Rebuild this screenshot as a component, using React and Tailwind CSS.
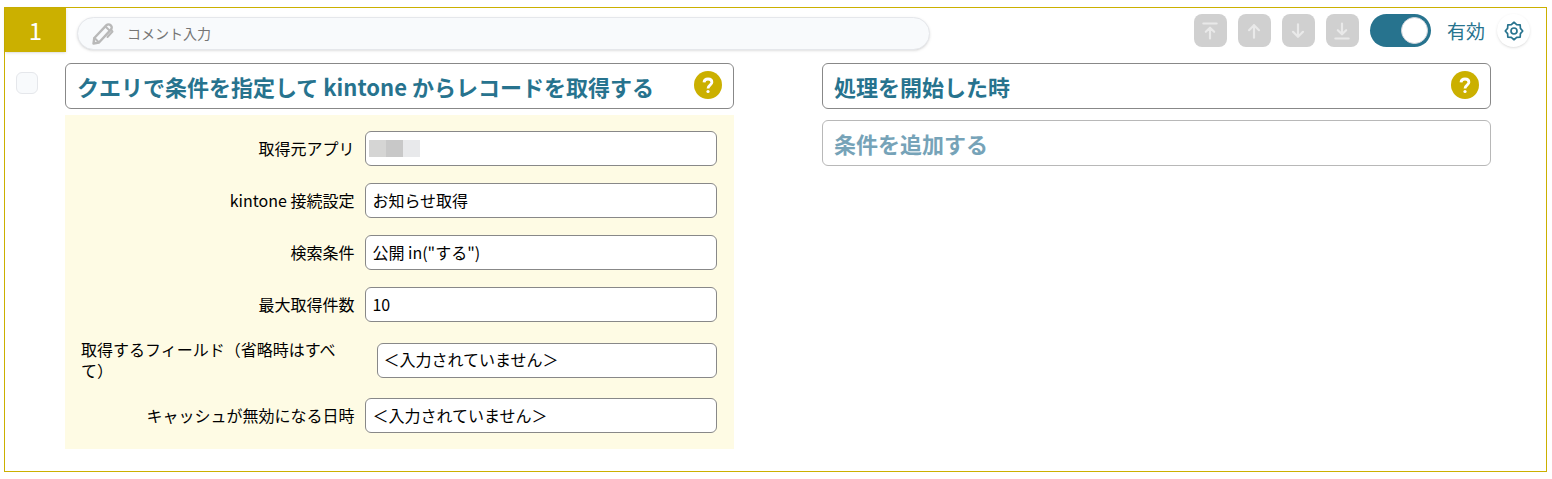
import { useState } from "react";

const fields = [
  { id: "sourceApp", label: "取得元アプリ", masked: true },
  { id: "connection", label: "kintone 接続設定", value: "お知らせ取得" },
  { id: "query", label: "検索条件", value: '公開 in("する")' },
  { id: "limit", label: "最大取得件数", value: "10" },
  { id: "fieldCodes", label: "取得するフィールド（省略時はすべて）", value: "＜入力されていません＞", wide: true },
  { id: "cacheExpire", label: "キャッシュが無効になる日時", value: "＜入力されていません＞" },
];

const moveButtons = [
  { label: "一番上へ移動", path: "M4 3h16M12 21V9M7 13l5-5 5 5" },
  { label: "上へ移動", path: "M12 20V5M6 11l6-6 6 6" },
  { label: "下へ移動", path: "M12 4v15M6 13l6 6 6-6" },
  { label: "一番下へ移動", path: "M4 21h16M12 3v12M7 11l5 5 5-5" },
];

const PencilIcon = () => (
  <svg viewBox="0 0 24 24" className="size-6 shrink-0" fill="none" stroke="#b9b9b9" strokeWidth="2.4" strokeLinecap="round" strokeLinejoin="round" aria-hidden="true">
    <path d="M2.500 21.500l.8-5.500L15.500 3.200a2.800 2.800 0 0 1 4 0l.4.4a2.800 2.800 0 0 1 0 4L8 20.500z" />
    <path d="M3.500 16l4.300 4.200M14.500 4.500l4 4" strokeWidth="2" />
    <path d="M20 7.500l1.500 2-5 5.500" strokeWidth="2" />
  </svg>
);

const GearIcon = () => (
  <svg viewBox="0 0 24 24" className="size-5" fill="none" stroke="#27738e" strokeWidth="2" strokeLinejoin="round" aria-hidden="true">
    <path d="M12 1.500l3.200 2.800 4.200.3.300 4.200 2.800 3.200-2.800 3.200-.3 4.200-4.200.3-3.200 2.800-3.200-2.800-4.200-.3-.3-4.200L1.500 12l2.800-3.200.3-4.200 4.200-.3z" />
    <circle cx="12" cy="12" r="3.600" />
  </svg>
);

const HelpButton = () => (
  <button type="button" aria-label="ヘルプ" className="size-7 shrink-0 rounded-full bg-[#cbb000] mb-0.5">
    <svg viewBox="0 0 28 28" className="size-7" fill="none" stroke="white" strokeWidth="2.8" aria-hidden="true">
      <path d="M10 11.300c.2-2.100 1.800-3.300 4-3.300s3.900 1.200 3.900 3.200c0 3-3.900 2.900-3.900 6.300" />
      <circle cx="14" cy="20.500" r="1.600" fill="white" stroke="none" />
    </svg>
  </button>
);

const TitleBox = ({ children }) => (
  <div className="flex items-center h-[46px] px-[11px] bg-white border border-[#888888] rounded-md">
    <button type="button" className="flex-1 text-left text-[22px] leading-8 font-bold text-[#27738e]">
      {children}
    </button>
    <HelpButton />
  </div>
);

const FieldRow = ({ field }) => (
  <div
    className={
      field.wide
        ? "grid grid-cols-[11fr_14fr] gap-7 items-center"
        : "grid grid-cols-[7fr_9fr] gap-[11px] items-center"
    }
  >
    <label htmlFor={field.id} className={field.wide ? "leading-[21px]" : "text-right leading-[21px]"}>
      {field.label}
    </label>
    {field.masked ? (
      <button id={field.id} type="button" className="flex items-center h-[35px] pl-[3px] bg-white border border-[#888888] rounded-md">
        <span className="size-[17px] bg-[#d5d5d4]" />
        <span className="size-[17px] bg-[#c8c8c8]" />
        <span className="size-[17px] bg-[#e8e9eb]" />
      </button>
    ) : (
      <input
        id={field.id}
        type="text"
        defaultValue={field.value}
        className="w-full min-w-0 h-[35px] px-[6px] pb-0.5 bg-white border border-[#888888] rounded-md"
      />
    )}
  </div>
);

const App = () => {
  const [enabled, setEnabled] = useState(true);
  const [comment, setComment] = useState("");

  return (
    <div className="pt-[7px] pl-1 pr-[5px] bg-white text-black text-base font-['Noto_Sans_CJK_JP',sans-serif]">
      <section className="border border-[#cbb000] pb-[22px]">
        {/* Cabecera del paso */}
        <header className="flex items-start pr-4">
          <div className="flex items-center justify-center w-[61px] h-11 shrink-0 bg-[#cbb000] text-white text-2xl shadow">
            1
          </div>

          <div className="flex flex-1 items-center max-w-[853px] h-[33px] mt-[9px] ml-[11px] pl-[13px] gap-3 rounded-full border border-gray-200 bg-slate-50 shadow">
            <PencilIcon />
            <input
              type="text"
              aria-label="コメント"
              placeholder="コメント入力"
              value={comment}
              onChange={(e) => setComment(e.target.value)}
              className="flex-1 min-w-0 pb-0.5 text-sm outline-none placeholder:text-[#757575]"
            />
          </div>

          <div className="flex items-center gap-[11px] mt-[6px] ml-auto">
            {moveButtons.map((button) => (
              <button
                key={button.label}
                type="button"
                disabled
                aria-label={button.label}
                className="flex items-center justify-center size-[33px] rounded-lg bg-[#d0d0d0]"
              >
                <svg viewBox="0 0 24 24" className="size-5" fill="none" stroke="#e9e9e9" strokeWidth="2.6" strokeLinecap="round" strokeLinejoin="round" aria-hidden="true">
                  <path d={button.path} />
                </svg>
              </button>
            ))}
            <label className="flex items-center gap-4 cursor-pointer">
              <input
                type="checkbox"
                role="switch"
                checked={enabled}
                onChange={(e) => setEnabled(e.target.checked)}
                className="peer sr-only"
              />
              <span className="flex items-center w-[61px] h-[33px] p-[3px] rounded-full bg-gray-300 peer-checked:bg-[#27738e] peer-checked:justify-end">
                <span className="size-[27px] rounded-full bg-white border border-gray-300" />
              </span>
              <span className="text-[19px] leading-7 text-[#27738e]">有効</span>
            </label>
            <button type="button" aria-label="設定" className="flex items-center justify-center size-[33px] ml-px rounded-full bg-white shadow">
              <GearIcon />
            </button>
          </div>
        </header>

        {/* Contenido: acción a la izquierda, condiciones a la derecha */}
        <div className="flex items-start pt-[11px] pl-[11px] pr-[55px]">
          <input
            type="checkbox"
            aria-label="選択"
            className="appearance-none size-[22px] mt-[9px] mr-[27px] shrink-0 rounded-md border border-gray-200 bg-slate-50 checked:bg-[#27738e]"
          />
          <div className="grid flex-1 grid-cols-2 gap-[88px] items-start">
            <div>
              <TitleBox>クエリで条件を指定して kintone からレコードを取得する</TitleBox>
              <div className="grid gap-[17px] mt-[6px] py-4 pl-4 pr-[17px] bg-[#fefbe4]">
                {fields.map((field) => (
                  <FieldRow key={field.id} field={field} />
                ))}
              </div>
            </div>

            <div className="grid gap-[11px]">
              <TitleBox>処理を開始した時</TitleBox>
              <button
                type="button"
                className="h-[46px] px-[11px] text-left text-[22px] leading-8 font-bold text-[#76a3b8] bg-white border border-[#b8b8b8] rounded-md"
              >
                条件を追加する
              </button>
            </div>
          </div>
        </div>
      </section>
    </div>
  );
};

export default App;
